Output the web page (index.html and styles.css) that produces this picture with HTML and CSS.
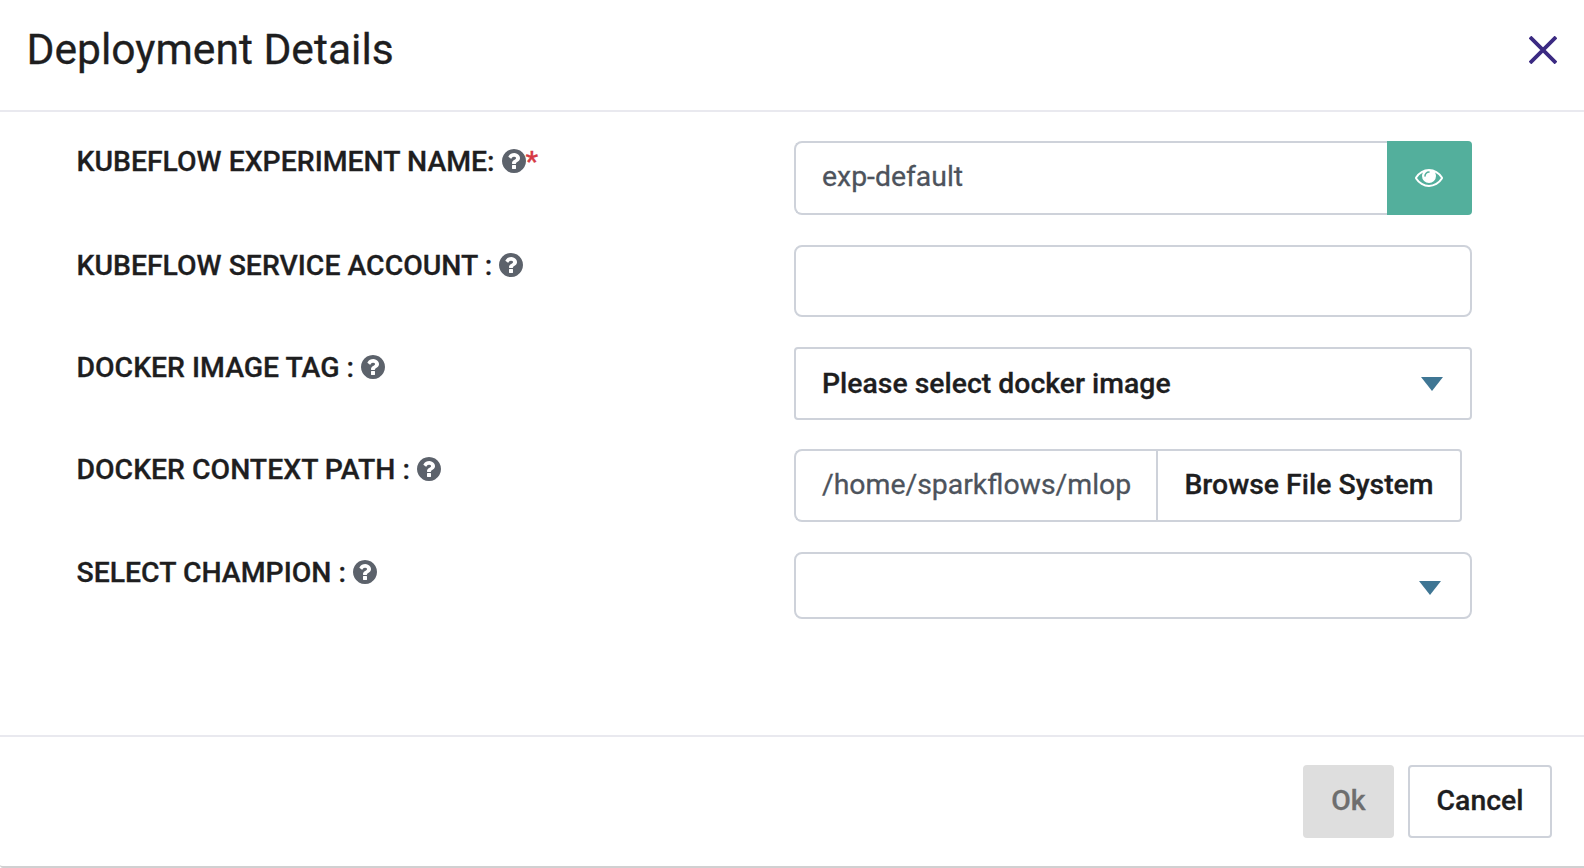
FILE: index.html
```html
<!DOCTYPE html>
<html lang="en">
<head>
<meta charset="utf-8">
<title>Deployment Details</title>
<link rel="stylesheet" href="styles.css">
</head>
<body>
<svg class="defs" aria-hidden="true">
  <symbol id="help" viewBox="128 128 1536 1536"><path d="M1024 1376v-192q0-14-9-23t-23-9h-192q-14 0-23 9t-9 23v192q0 14 9 23t23 9h192q14 0 23-9t9-23zm256-672q0-88-55.500-163t-138.500-116-170-41q-243 0-371 213-15 24 8 42l132 100q7 6 19 6 16 0 25-12 53-68 86-92 34-24 86-24 48 0 85.500 26t37.500 59q0 38-20 61t-68 45q-63 28-115.500 86.500t-52.500 125.500v36q0 14 9 23t23 9h192q14 0 23-9t9-23q0-19 21.500-49.500t54.500-49.500q32-18 49-28.500t46-35 44.500-48 28-60.500 12.500-81zm384 192q0 209-103 385.500t-279.500 279.500-385.500 103-385.500-103-279.500-279.500-103-385.500 103-385.500 279.500-279.500 385.500-103 385.500 103 279.500 279.500 103 385.500z"/></symbol>
</svg>
<div class="modal">
  <header class="header">
    <h1 class="title">Deployment Details</h1>
    <svg class="close" viewBox="0 0 28 28"><path d="M1 1 27 27M27 1 1 27"/></svg>
  </header>
  <main class="body">
    <div class="row row-name">
      <div class="label"><span>KUBEFLOW EXPERIMENT NAME:</span><svg class="help"><use href="#help"/></svg><span class="required">*</span></div>
      <div class="control group">
        <div class="input input-left">exp-default</div>
        <div class="view"><svg class="eye" viewBox="0 384 1792 1152"><path d="M1664 960q-152-236-381-353 61 104 61 225 0 185-131.500 316.500t-316.500 131.500-316.500-131.500-131.500-316.500q0-121 61-225-229 117-381 353 133 205 333.500 326.500t434.500 121.500 434.500-121.500 333.500-326.500zm-720-384q0-20-14-34t-34-14q-125 0-214.500 89.500t-89.500 214.500q0 20 14 34t34 14 34-14 14-34q0-86 61-147t147-61q20 0 34-14t14-34zm848 384q0 34-20 69-140 230-376.500 368.500t-499.500 138.500-499.500-139-376.500-368q-20-35-20-69t20-69q140-229 376.500-368t499.500-139 499.500 139 376.500 368q20 35 20 69z"/></svg></div>
      </div>
    </div>
    <div class="row row-account">
      <div class="label"><span>KUBEFLOW SERVICE ACCOUNT :</span><svg class="help"><use href="#help"/></svg></div>
      <div class="control"><div class="input"></div></div>
    </div>
    <div class="row row-tag">
      <div class="label"><span>DOCKER IMAGE TAG :</span><svg class="help"><use href="#help"/></svg></div>
      <div class="control"><div class="select"><span>Please select docker image</span><svg class="arrow" viewBox="0 0 22 14"><path d="M0 0h22L11 14z"/></svg></div></div>
    </div>
    <div class="row row-path">
      <div class="label"><span>DOCKER CONTEXT PATH :</span><svg class="help"><use href="#help"/></svg></div>
      <div class="control group path-group">
        <div class="input input-left">/home/sparkflows/mlop</div>
        <div class="browse">Browse File System</div>
      </div>
    </div>
    <div class="row row-champion">
      <div class="label"><span>SELECT CHAMPION :</span><svg class="help"><use href="#help"/></svg></div>
      <div class="control"><div class="input select-empty"><svg class="arrow" viewBox="0 0 22 14"><path d="M0 0h22L11 14z"/></svg></div></div>
    </div>
  </main>
  <footer class="footer">
    <div class="button button-ok">Ok</div>
    <div class="button button-cancel">Cancel</div>
  </footer>
</div>
</body>
</html>
```
FILE: styles.css
```css
* { box-sizing: border-box; }
body {
  margin: 0;
  background: #fff;
  color: #1e1e1f;
  font: 400 28.4px/32px Roboto, sans-serif;
  -webkit-text-stroke: 0.3px;
}
.defs { position: absolute; width: 0; height: 0; }
.modal {
  display: flex;
  flex-direction: column;
  height: 868px;
  overflow: hidden;
  border-bottom: 2px solid #d0d0d1;
  border-bottom-left-radius: 3px;
}
.header {
  display: flex;
  justify-content: space-between;
  height: 112px;
  padding: 24px 27px 0 26.5px;
  border-bottom: 2px solid #e9e9ef;
}
.title { margin: 0; font-size: 42.6px; line-height: 50px; font-weight: 400; }
.close {
  width: 28px;
  height: 28px;
  margin-top: 12px;
  fill: none;
  stroke: #3b2a82;
  stroke-width: 3.8;
}
.body {
  display: flex;
  flex-direction: column;
  gap: 30px;
  flex: 1;
  padding: 29px 112px 0 76.5px;
}
.row {
  display: grid;
  grid-template-columns: 717.5px 678px;
}
.row-name { height: 74px; }
.row-account { height: 72px; }
.row-tag { height: 73px; margin-bottom: -1px; }
.row-path { height: 73px; }
.row-champion { height: 67px; }
.label {
  display: flex;
  align-items: center;
  height: 32px;
  margin-top: 4px;
  font-weight: 500;
  white-space: nowrap;
}
.label span { padding-top: 2px; }
.help { width: 24px; height: 24px; margin-left: 7px; fill: #5c626b; }
.required { color: #d63a45; }
.control { display: flex; }
.input, .select {
  display: flex;
  align-items: center;
  flex: 1;
  min-width: 0;
  padding: 0 26px;
  border: 2px solid #ced2da;
  border-radius: 8px;
  color: #4d535c;
  white-space: nowrap;
}
.input-left { padding-bottom: 2px; border-right: 0; border-radius: 8px 0 0 8px; }
.select {
  justify-content: space-between;
  padding-right: 27px;
  border-radius: 4px;
  color: #1e1e1f;
  font-weight: 500;
}
.select-empty { justify-content: flex-end; padding: 5px 29px 0 0; }
.arrow { width: 22px; height: 14px; fill: #3f7694; }
.view {
  display: flex;
  align-items: center;
  justify-content: center;
  width: 85px;
  padding-right: 1px;
  border-radius: 0 4px 4px 0;
  background: #53af9c;
}
.eye { width: 28px; height: 18px; fill: #fff; }
.path-group { width: 668px; }
.browse {
  display: flex;
  flex: none;
  align-items: center;
  justify-content: center;
  width: 306px;
  padding-bottom: 2px;
  border: 2px solid #ced2da;
  border-radius: 0 4px 4px 0;
  font-weight: 500;
}
.footer {
  display: flex;
  justify-content: flex-end;
  gap: 14px;
  height: 131px;
  padding: 28px 32px 0 0;
  border-top: 2px solid #e9e9ef;
}
.button {
  display: flex;
  align-items: center;
  justify-content: center;
  height: 73px;
  padding-bottom: 1px;
  border-radius: 4px;
  font-weight: 500;
}
.button-ok { width: 91px; background: #dedede; color: #6e6e6e; }
.button-cancel { width: 144px; border: 2px solid #ced2da; }
```
